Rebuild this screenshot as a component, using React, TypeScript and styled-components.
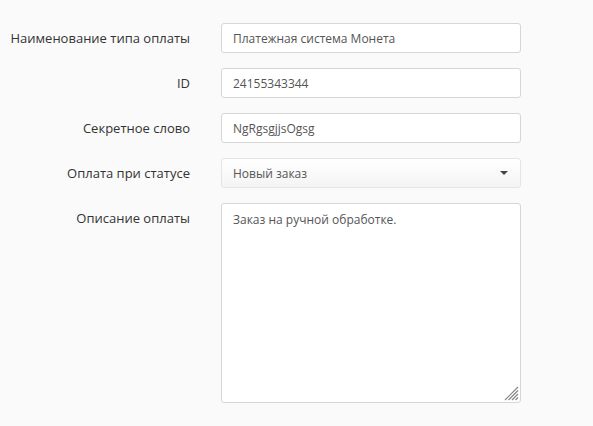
import styled, { createGlobalStyle } from "styled-components";

const GlobalStyle = createGlobalStyle`
  html, body {
    margin: 0;
    padding: 0;
    background: #fafafa;
  }
  body {
    font-family: "Open Sans", "Liberation Sans", sans-serif;
    font-size: 13px;
    color: #333;
  }
`;

/**
 * Form wrapper
 */
const StyledForm = styled.form`
  display: grid;
  grid-template-columns: 190px 300px;
  column-gap: 31px;
  row-gap: 15px;
  padding: 23px 0 0 0;
`;

/**
 * Field label
 */
const StyledLabel = styled.label`
  text-align: right;
  line-height: 30px;
  color: #333;
  white-space: nowrap;
`;

const fieldBase = `
  box-sizing: border-box;
  width: 300px;
  border: 1px solid #d6d6d6;
  border-radius: 3px;
  font-family: "Open Sans", "Liberation Sans", sans-serif;
  font-size: 12px;
  color: #555;
  outline: none;
`;

/**
 * Text input
 */
const StyledInput = styled.input`
  ${fieldBase}
  height: 30px;
  padding: 0 11px;
  background: #fff;
`;

/**
 * Select box
 */
const StyledSelect = styled.div`
  ${fieldBase}
  height: 30px;
  padding: 0 11px;
  display: flex;
  align-items: center;
  justify-content: space-between;
  background: linear-gradient(#ffffff, #f4f4f4);
  border-color: #e4e4e4;
`;

const Caret = styled.span`
  width: 0;
  height: 0;
  margin-right: 1px;
  border-left: 4px solid transparent;
  border-right: 4px solid transparent;
  border-top: 4px solid #444;
`;

/**
 * Textarea with its grip
 */
const TextareaWrap = styled.div`
  position: relative;
  width: 300px;
  height: 200px;
`;

const StyledTextarea = styled.textarea`
  ${fieldBase}
  display: block;
  height: 200px;
  padding: 7px 11px;
  background: #fff;
  resize: none;
`;

const Grip = styled.svg`
  position: absolute;
  right: 2px;
  bottom: 2px;
  pointer-events: none;
`;

const App = (): JSX.Element => {
  return (
    <>
      <GlobalStyle />
      <StyledForm>
        <StyledLabel>Наименование типа оплаты</StyledLabel>
        <StyledInput defaultValue="Платежная система Монета" />

        <StyledLabel>ID</StyledLabel>
        <StyledInput defaultValue="24155343344" />

        <StyledLabel>Секретное слово</StyledLabel>
        <StyledInput defaultValue="NgRgsgjjsOgsg" />

        <StyledLabel>Оплата при статусе</StyledLabel>
        <StyledSelect>
          <span>Новый заказ</span>
          <Caret />
        </StyledSelect>

        <StyledLabel>Описание оплаты</StyledLabel>
        <TextareaWrap>
          <StyledTextarea defaultValue="Заказ на ручной обработке." />
          <Grip width="15" height="15" viewBox="0 0 15 15">
            <g stroke="#888" strokeWidth="1.2">
              <line x1="1" y1="14" x2="14" y2="1" />
              <line x1="4.5" y1="14" x2="14" y2="4.5" />
              <line x1="8" y1="14" x2="14" y2="8" />
              <line x1="11.5" y1="14" x2="14" y2="11.5" />
            </g>
          </Grip>
        </TextareaWrap>
      </StyledForm>
    </>
  );
};

export default App;
